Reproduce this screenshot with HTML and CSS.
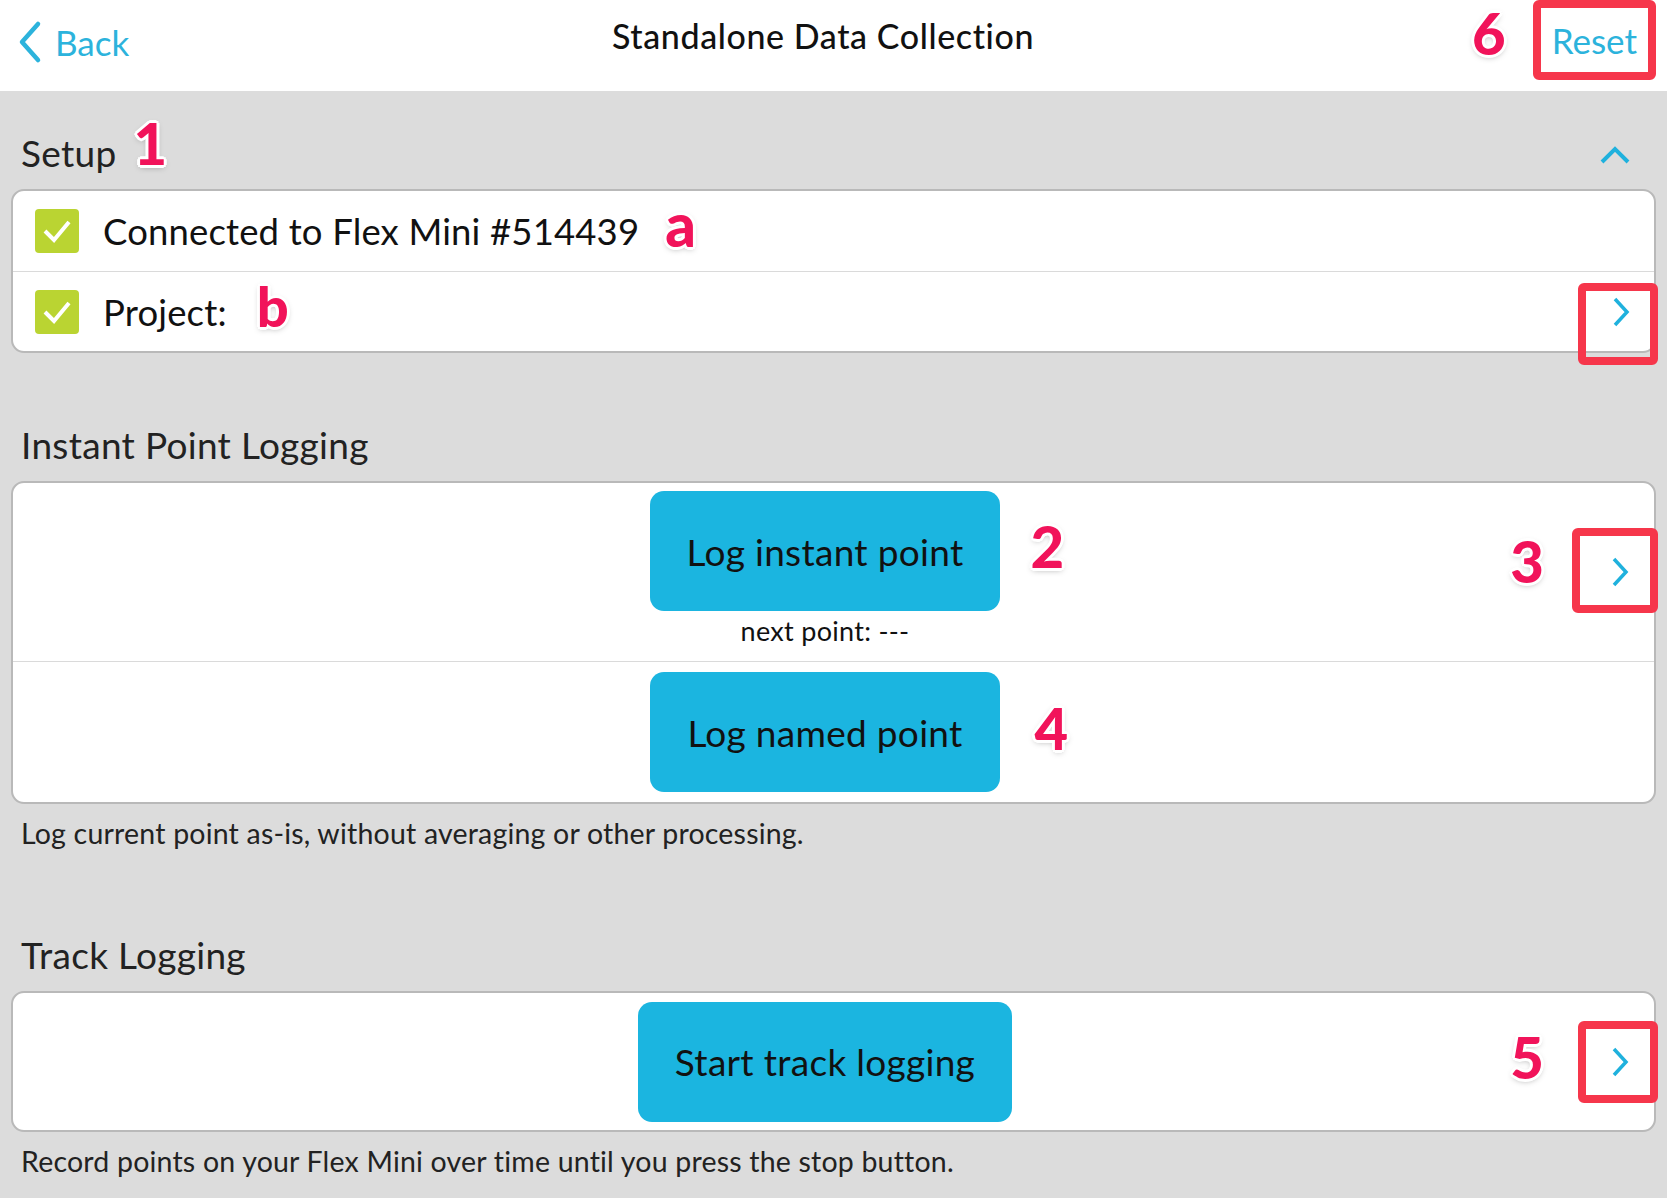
FILE: index.html
```html
<!DOCTYPE html>
<html lang="en">
<head>
<meta charset="utf-8">
<title>Standalone Data Collection</title>
<link rel="stylesheet" href="styles.css">
</head>
<body>
<header class="topbar">
  <a class="back">
    <svg class="back-icon" width="26" height="44" viewBox="0 0 26 44"><path d="M21 4 L5 22 L21 40" fill="none" stroke="#2cb3dc" stroke-width="4.5" stroke-linecap="round" stroke-linejoin="round"/></svg>
    <span>Back</span>
  </a>
  <h1 class="title">Standalone Data Collection</h1>
  <div class="actions">
    <span class="anno anno-6">6</span>
    <a class="reset">Reset</a>
    <span class="hl hl-reset"></span>
  </div>
</header>

<main class="content">
  <section class="section">
    <div class="section-head">
      <h2 class="section-title">Setup</h2>
      <span class="anno anno-1">1</span>
      <svg class="collapse" width="32" height="22" viewBox="0 0 32 22"><path d="M3 18 L16 5 L29 18" fill="none" stroke="#1fb1dd" stroke-width="4"/></svg>
    </div>
    <div class="card">
      <div class="row check-row">
        <span class="checkbox"><svg width="44" height="44" viewBox="0 0 44 44"><path d="M10 22 L19 31 L34 13" fill="none" stroke="#fff" stroke-width="4"/></svg></span>
        <span class="row-text">Connected to Flex Mini #514439</span>
        <span class="anno anno-a">a</span>
      </div>
      <div class="row check-row">
        <span class="checkbox"><svg width="44" height="44" viewBox="0 0 44 44"><path d="M10 22 L19 31 L34 13" fill="none" stroke="#fff" stroke-width="4"/></svg></span>
        <span class="row-text">Project:</span>
        <span class="anno anno-b">b</span>
        <svg class="disclosure" width="20" height="32" viewBox="0 0 20 32"><path d="M4 3 L16 16 L4 29" fill="none" stroke="#1fb1dd" stroke-width="3.5"/></svg>
        <span class="hl hl-project"></span>
      </div>
    </div>
  </section>

  <section class="section">
    <div class="section-head">
      <h2 class="section-title">Instant Point Logging</h2>
    </div>
    <div class="card">
      <div class="row btn-row btn-row-first">
        <div class="btn-stack">
          <div class="btn-line">
            <button class="action">Log instant point</button>
            <span class="anno anno-2">2</span>
          </div>
          <div class="hint">next point: ---</div>
        </div>
        <div class="accessory accessory-3">
          <span class="anno anno-3">3</span>
          <svg class="disclosure" width="20" height="32" viewBox="0 0 20 32"><path d="M4 3 L16 16 L4 29" fill="none" stroke="#1fb1dd" stroke-width="3.5"/></svg>
        </div>
        <span class="hl hl-3"></span>
      </div>
      <div class="row btn-row btn-row-second">
        <div class="btn-stack">
          <div class="btn-line">
            <button class="action">Log named point</button>
            <span class="anno anno-4">4</span>
          </div>
        </div>
      </div>
    </div>
    <p class="caption">Log current point as-is, without averaging or other processing.</p>
  </section>

  <section class="section">
    <div class="section-head">
      <h2 class="section-title">Track Logging</h2>
    </div>
    <div class="card">
      <div class="row btn-row btn-row-track">
        <div class="btn-stack">
          <div class="btn-line">
            <button class="action">Start track logging</button>
          </div>
        </div>
        <div class="accessory accessory-5">
          <span class="anno anno-5">5</span>
          <svg class="disclosure" width="20" height="32" viewBox="0 0 20 32"><path d="M4 3 L16 16 L4 29" fill="none" stroke="#1fb1dd" stroke-width="3.5"/></svg>
        </div>
        <span class="hl hl-5"></span>
      </div>
    </div>
    <p class="caption">Record points on your Flex Mini over time until you press the stop button.</p>
  </section>
</main>
</body>
</html>
```

FILE: styles.css
```css
* { box-sizing: border-box; }

html, body {
  margin: 0;
  padding: 0;
}

body {
  width: 1667px;
  min-height: 1198px;
  background: #dcdcdc;
  font-family: "Lato", "Open Sans", "Liberation Sans", sans-serif;
  color: #1c1c1c;
  overflow: hidden;
}

/* ---------- top bar ---------- */
.topbar {
  position: relative;
  height: 91px;
  background: #ffffff;
  display: grid;
  grid-template-columns: 1fr auto 1fr;
  align-items: center;
  padding: 0 30px 8px 17px;
}

.back {
  justify-self: start;
  display: flex;
  align-items: center;
  gap: 12px;
  color: #2cb3dc;
  font-size: 35px;
}

.back-icon { display: block; }

.title {
  margin: 0 8px 12px 0;
  font-size: 34px;
  font-weight: 500;
  color: #111;
  letter-spacing: 0.6px;
}

.actions {
  justify-self: end;
  display: flex;
  align-items: center;
  gap: 46px;
}

.reset {
  color: #2cb3dc;
  font-size: 35px;
  margin-bottom: 4px;
}

/* ---------- annotations ---------- */
.anno {
  font-family: "Lato", "Open Sans", sans-serif;
  font-weight: 900;
  color: #f1135a;
  line-height: 1;
  font-size: 58px;
  text-shadow:
    3px 0 0 #fff, -3px 0 0 #fff, 0 3px 0 #fff, 0 -3px 0 #fff,
    2px 2px 0 #fff, -2px 2px 0 #fff, 2px -2px 0 #fff, -2px -2px 0 #fff,
    0 2px 6px rgba(0, 0, 0, 0.35);
}

.anno-6 { margin-bottom: 18px; }

.hl {
  position: absolute;
  border: 8px solid #f6364b;
  border-radius: 6px;
  pointer-events: none;
}

.hl-reset { right: 11px; top: 0; width: 123px; height: 80px; }
.hl-project { right: -4px; top: 11px; width: 80px; height: 82px; }
.hl-3 { right: -4px; top: 45px; width: 86px; height: 85px; }
.hl-5 { right: -4px; top: 28px; width: 80px; height: 82px; }

/* ---------- content ---------- */
.content {
  padding: 36px 11px 0;
}

.section { padding-bottom: 66px; }

.section-head {
  height: 50px;
  margin-bottom: 12px;
  padding-left: 10px;
  display: flex;
  align-items: center;
}

.section-title {
  margin: 0;
  font-size: 37px;
  font-weight: 400;
  letter-spacing: 0.3px;
  color: #222;
}

.anno-1 { margin-left: 17px; margin-bottom: 18px; }

.collapse {
  margin-left: auto;
  margin-right: 25px;
  margin-top: 6px;
}

.card {
  background: #fff;
  border: 2px solid #b9b9b9;
  border-radius: 13px;
}

.row {
  position: relative;
}

.row + .row { border-top: 1px solid #dadada; }

/* check rows */
.check-row {
  height: 80px;
  display: flex;
  align-items: center;
  padding-left: 22px;
}

.checkbox {
  width: 44px;
  height: 44px;
  border-radius: 4px;
  background: #bad432;
  display: flex;
  margin-right: 24px;
}

.row-text {
  font-size: 36.5px;
  letter-spacing: 0.15px;
  color: #111;
}

.anno-a { margin-left: 26px; margin-bottom: 14px; font-size: 60px; }
.anno-b { margin-left: 30px; margin-bottom: 12px; font-size: 56px; }

.check-row .disclosure {
  margin-left: auto;
  margin-right: 23px;
}

/* button rows */
.btn-row {
  display: grid;
  align-items: center;
}

.btn-row > .btn-stack,
.btn-row > .accessory {
  grid-area: 1 / 1;
}

.btn-row-first { padding: 8px 0 15px; }
.btn-row-second { height: 141px; }
.btn-row-track { height: 137px; }

.btn-stack {
  justify-self: center;
  margin-right: 17px;
  display: flex;
  flex-direction: column;
  align-items: center;
}

.btn-line {
  position: relative;
}

.action {
  height: 120px;
  padding: 0 37px;
  border: none;
  border-radius: 14px;
  background: #1bb5e0;
  font-family: inherit;
  font-size: 37px;
  letter-spacing: 0.3px;
  color: #111;
}

.btn-line .anno {
  position: absolute;
  top: 50%;
}

.anno-2 { left: calc(100% + 30px); transform: translateY(-58%); }
.anno-4 { left: calc(100% + 35px); transform: translateY(-57%); }

.hint {
  margin-top: 5px;
  line-height: 30px;
  font-size: 27px;
  letter-spacing: 0.3px;
  color: #111;
}

.accessory {
  justify-self: end;
  display: flex;
  align-items: center;
  margin-right: 24px;
  gap: 66px;
}

.accessory-3 { margin-top: 7px; }
.anno-3 { margin-bottom: 22px; }
.anno-5 { margin-bottom: 10px; }

.disclosure { display: block; }

.caption {
  margin: 11px 0 12px 10px;
  font-size: 28.5px;
  line-height: 36px;
  letter-spacing: 0.2px;
  color: #222;
}
```
